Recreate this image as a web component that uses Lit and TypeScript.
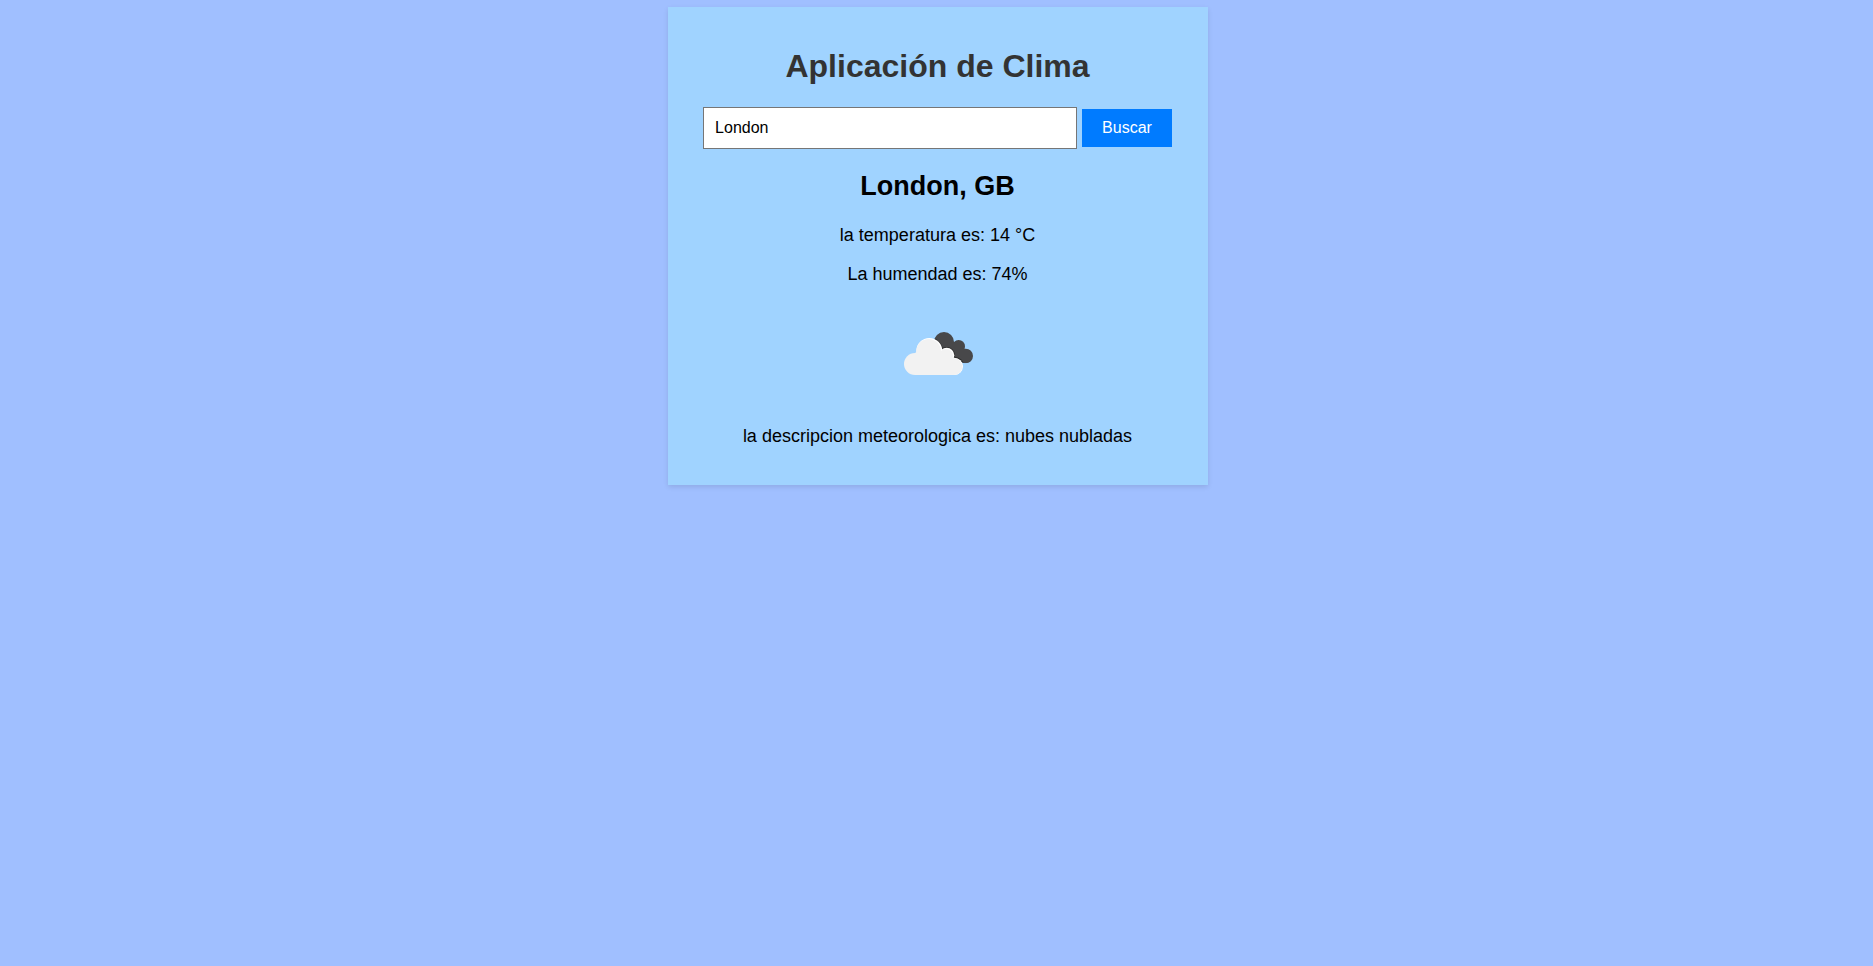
import { LitElement, html, css } from "lit";
import { customElement, state } from "lit/decorators.js";

interface Weather {
  city: string;
  country: string;
  temperature: number;
  humidity: number;
  description: string;
}

@customElement("broken-clouds-icon")
export class BrokenCloudsIcon extends LitElement {
  static styles = css`
    :host {
      display: block;
      width: 100px;
      height: 100px;
    }
    .icon {
      display: block;
      width: 100%;
      height: 100%;
    }
    .rear {
      fill: #48484a;
    }
    .shade {
      fill: #2b2b2b;
    }
    .rim {
      fill: #ffffff;
    }
    .front {
      fill: #f2f2f2;
    }
  `;

  render() {
    return html`
      <svg class="icon" viewBox="-6 -51 300 300" role="img" aria-label="Nubes">
        <defs>
          <clipPath id="rear-shape">
            <circle cx="162" cy="66" r="30" />
            <circle cx="206" cy="79" r="19" />
            <circle cx="227" cy="108" r="22" />
            <path d="M150 66H192L208 77L228 90V126H180Z" />
          </clipPath>
        </defs>
        <g clip-path="url(#rear-shape)">
          <rect class="rear" x="120" y="30" width="140" height="110" />
          <g class="shade">
            <circle cx="117" cy="94" r="42" />
            <circle cx="170" cy="106" r="25" />
            <circle cx="193" cy="139" r="29" />
          </g>
        </g>
        <g class="front">
          <circle cx="75" cy="132" r="33" />
          <circle class="rim" cx="118" cy="93" r="39" />
          <circle class="rim" cx="170" cy="106" r="23" />
          <circle class="rim" cx="193" cy="139" r="26" />
          <circle cx="116" cy="94" r="37" />
          <circle cx="168" cy="108" r="21" />
          <circle cx="192" cy="140" r="25" />
          <path d="M75 99L117 70L150 90L180 115L193 130V165H75Z" />
        </g>
      </svg>
    `;
  }
}

@customElement("app-root")
export class AppRoot extends LitElement {
  static styles = css`
    :host {
      display: block;
      box-sizing: border-box;
      min-height: 100vh;
      padding: 7px 0 8px 2px;
      background: #a0bfff;
      font-family: "Liberation Sans", Arial, sans-serif;
      color: #000;
    }
    .card {
      box-sizing: border-box;
      max-width: 540px;
      margin: 0 auto;
      padding: 41px 20px 38px;
      background: #a0d3ff;
      box-shadow: 0 2px 5px rgba(0, 0, 0, 0.1);
      text-align: center;
    }
    .title {
      margin: 0 0 22px;
      font-size: 32px;
      line-height: 37px;
      color: #333;
    }
    .search {
      display: flex;
      justify-content: center;
      align-items: center;
      gap: 5px;
    }
    .field {
      box-sizing: border-box;
      flex: 0 1 374px;
      min-width: 0;
      height: 42px;
      margin: 0;
      padding: 0 11px;
      border: 1px solid #767676;
      border-radius: 0;
      background: #fff;
      color: #000;
      font: inherit;
      font-size: 16px;
      outline: none;
    }
    .button {
      padding: 10px 20px;
      border: 0;
      background: #007bff;
      color: #fff;
      font: inherit;
      font-size: 16px;
      line-height: 18px;
      cursor: pointer;
    }
    .result {
      display: flex;
      flex-direction: column;
      align-items: center;
      gap: 18px;
      margin-top: 22px;
      font-size: 18px;
      line-height: 21px;
    }
    .city {
      margin: 0 0 5px;
      font-size: 27px;
      line-height: 31px;
    }
    .line {
      margin: 0;
    }
    .picture {
      margin-bottom: 5px;
    }
  `;

  @state() private query = "London";

  @state() private weather: Weather = {
    city: "London",
    country: "GB",
    temperature: 14,
    humidity: 74,
    description: "nubes nubladas",
  };

  private onInput(event: Event) {
    this.query = (event.target as HTMLInputElement).value;
  }

  private onSubmit(event: Event) {
    event.preventDefault();
  }

  render() {
    const w = this.weather;
    return html`
      <main class="card">
        <h1 class="title">Aplicación de Clima</h1>
        <form class="search" @submit=${this.onSubmit}>
          <input
            class="field"
            type="text"
            aria-label="Ciudad"
            .value=${this.query}
            @input=${this.onInput}
          />
          <button class="button" type="submit">Buscar</button>
        </form>
        <section class="result">
          <h2 class="city">${w.city}, ${w.country}</h2>
          <p class="line">la temperatura es: ${w.temperature} °C</p>
          <p class="line">La humendad es: ${w.humidity}%</p>
          <broken-clouds-icon class="picture"></broken-clouds-icon>
          <p class="line">la descripcion meteorologica es: ${w.description}</p>
        </section>
      </main>
    `;
  }
}
